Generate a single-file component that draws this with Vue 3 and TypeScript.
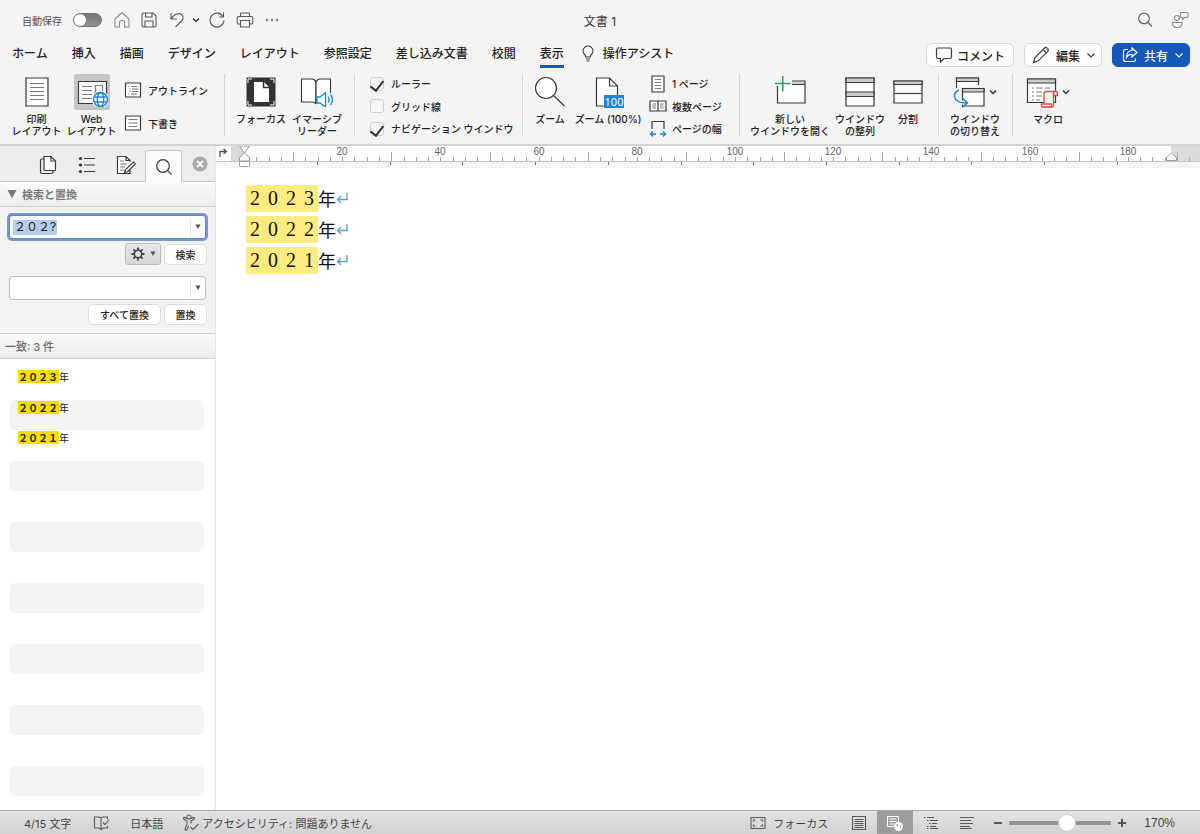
<script setup lang="ts">
import { ref } from 'vue'

const tabs: string[] = ['ホーム', '挿入', '描画', 'デザイン', 'レイアウト', '参照設定', '差し込み文書', '校閲', '表示']
const activeTab = ref('表示')
const autosave = ref(false)
const showRuler = ref(true)
const showGrid = ref(false)
const showNav = ref(true)
const query = ref('２０２?')
const replacement = ref('')
const zoomLevel = ref(58)

const years: string[] = ['2023', '2022', '2021']
const results: string[] = ['２０２３', '２０２２', '２０２１']
const rows: string[] = Array.from({ length: 14 }, (_, i) => results[i] ?? '')

interface Tick { x: number; tall: boolean }
const origin = 28
const unit = 4.91
const ticks: Tick[] = Array.from({ length: 77 }, (_, i) => ({
  x: Math.round(origin + (i + 1) * 2.5 * unit),
  tall: (i + 1) % 8 === 4,
}))
const labels = Array.from({ length: 9 }, (_, i) => ({
  x: Math.round(origin + (i + 1) * 20 * unit),
  value: (i + 1) * 20,
}))
const tabStops: number[] = Array.from({ length: 12 }, (_, i) => Math.round(101 + i * 72.7))
</script>

<template>
  <div class="app">
    <header class="titlebar">
      <div class="quick">
        <label class="autosave">自動保存<input v-model="autosave" type="checkbox" class="switch" /></label>
        <button class="ib home" aria-label="ホーム">
          <svg width="18" height="18" viewBox="0 0 18 18" class="ln light"><path d="M2 8 L9 1.5 L16 8 V16 H11.5 V11 Q11.5 9.5 9 9.5 Q6.5 9.5 6.5 11 V16 H2 Z" /></svg>
        </button>
        <button class="ib save" aria-label="保存">
          <svg width="18" height="18" viewBox="0 0 18 18" class="ln"><path d="M3.5 2 H13 L16 5 V14.5 Q16 16 14.5 16 H3.5 Q2 16 2 14.5 V3.5 Q2 2 3.5 2 Z M5.5 2 V6 H12 V2 M5 16 V10 H13 V16" /></svg>
        </button>
        <button class="ib undo" aria-label="元に戻す">
          <svg width="18" height="18" viewBox="0 0 18 18" class="ln"><path d="M3 2 V8 H9 M3.3 7.5 C7 2 12.5 1.500 14.500 4.500 C16 7 14.500 9 13 10.500 L7.500 16" /></svg>
        </button>
        <button class="ib chev" aria-label="履歴">
          <svg width="8" height="8" viewBox="0 0 8 8" class="ln bold"><path d="M1 2.500 L4 5.500 L7 2.500" /></svg>
        </button>
        <button class="ib redo" aria-label="繰り返し">
          <svg width="18" height="18" viewBox="0 0 18 18" class="ln"><path d="M15.500 1.500 V6 H11 M15 5.500 A7 7 0 1 0 16 9.500" /></svg>
        </button>
        <button class="ib print" aria-label="印刷">
          <svg width="18" height="18" viewBox="0 0 18 18" class="ln"><path d="M4.500 5.500 V2.500 Q4.500 2 5 2 H13 Q13.500 2 13.500 2.500 V5.500 M4.500 13 H2.500 Q1.200 13 1.200 11.700 V7 Q1.200 5.500 2.700 5.500 H15.300 Q16.800 5.500 16.800 7 V11.700 Q16.800 13 15.500 13 H13.500 M4.500 9.500 H13.500 V16 H4.500 Z" /></svg>
        </button>
        <button class="ib dots" aria-label="その他">
          <svg width="14" height="4" viewBox="0 0 14 4" fill="#777"><circle cx="2" cy="2" r="1.200" /><circle cx="7" cy="2" r="1.200" /><circle cx="12" cy="2" r="1.200" /></svg>
        </button>
      </div>
      <h1 class="title">文書 1</h1>
      <div class="right-tools">
        <button class="ib" aria-label="検索">
          <svg width="18" height="18" viewBox="0 0 18 18" class="ln"><circle cx="8" cy="7.500" r="5.300" /><path d="M12 11.500 L16 15.500" /></svg>
        </button>
        <button class="ib" aria-label="共同編集">
          <svg width="18" height="18" viewBox="0 0 18 18" class="ln light"><circle cx="6" cy="7" r="2.500" /><path d="M1.500 11.500 H11 Q11.500 16.500 6.300 16.500 Q1 16.500 1.500 11.500 Z M10.500 1.500 H16 Q17 1.500 17 2.500 V5.500 Q17 6.500 16 6.500 H13.500 L11.500 8.500 V6.500 H10.500 Q9.500 6.500 9.500 5.500 V2.500 Q9.500 1.500 10.500 1.500 Z" /></svg>
        </button>
      </div>
    </header>

    <nav class="tabs">
      <button v-for="t in tabs" :key="t" class="tab" :class="{ active: t === activeTab }" @click="activeTab = t">{{ t }}</button>
      <button class="tab tellme">
        <svg width="12" height="18" viewBox="0 0 12 18" class="ln dark"><path d="M3.800 12 Q3.800 10.500 2.200 8.800 A4.800 4.800 0 1 1 9.800 8.800 Q8.200 10.500 8.200 12 Z M4 14 H8 M4.500 16 H7.500" /></svg>
        操作アシスト
      </button>
      <div class="actions">
        <button class="pill comment">
          <svg width="18" height="18" viewBox="0 0 18 18" class="ln dark"><path d="M3 2 H15 Q16.500 2 16.500 3.500 V11 Q16.500 12.500 15 12.500 H9 L5.500 16 V12.500 H3 Q1.500 12.500 1.500 11 V3.500 Q1.500 2 3 2 Z" /></svg>
          コメント
        </button>
        <button class="pill edit">
          <svg width="18" height="18" viewBox="0 0 18 18" class="ln dark"><path d="M1.500 16.500 L3 11.500 L12.500 2 Q14 0.800 15.500 2.300 Q17 3.900 15.800 5.300 L6.300 14.800 Z M11 3.500 L14.300 6.800" /></svg>
          編集
          <svg width="10" height="10" viewBox="0 0 10 10" class="ln dark"><path d="M1.500 3.500 L5 7 L8.500 3.500" /></svg>
        </button>
        <button class="pill share">
          <svg width="16" height="16" viewBox="0 0 16 16" class="ln"><path d="M6 2.500 H3.500 Q1.500 2.500 1.500 4.500 V12.500 Q1.500 14.500 3.500 14.500 H11.500 Q13.500 14.500 13.500 12.500 V11.500 M10 1 L15 5.500 L10 10 V7.500 Q6.500 7 4.500 10.500 Q4.500 4 10 3.500 Z" /></svg>
          共有
          <svg width="10" height="10" viewBox="0 0 10 10" class="ln"><path d="M1.500 3.500 L5 7 L8.500 3.500" /></svg>
        </button>
      </div>
    </nav>

    <section class="ribbon">
      <div class="group views">
        <button class="big w55">
          <span class="pic"><svg width="30" height="30" viewBox="0 0 30 30" class="ln dark"><path class="paper" d="M4 1 H26 V29 H4 Z" /><path class="grey" d="M8 6.500 H22 M8 10.500 H22 M8 14.500 H22 M8 18.500 H22 M8 22.500 H22" /></svg></span>
          <span>印刷<br />レイアウト</span>
        </button>
        <button class="big w55">
          <span class="pic on"><svg width="32" height="30" viewBox="0 0 32 30" class="ln dark"><path class="paper" d="M2.500 4.500 H30.500 V26.500 H2.500 Z" /><path class="grey" d="M6 9.500 H16 M6 13.500 H16 M6 17.500 H16 M6 21.500 H16 M19.500 8.500 H26.500 V16 H19.500 Z" /><circle cx="24.500" cy="22.500" r="8.500" fill="#fff" stroke="none" /><g stroke="#1e86d2" stroke-width="1.400" fill="none"><circle cx="24.500" cy="22.500" r="7" /><ellipse cx="24.500" cy="22.500" rx="3.200" ry="7" /><path d="M18 20 H31 M18 25 H31" /></g></svg></span>
          <span>Web<br />レイアウト</span>
        </button>
        <div class="stack two">
          <button class="small"><svg width="18" height="16" viewBox="0 0 18 16" class="ln dark"><path class="paper" d="M1.500 1 H16.500 V15 H1.500 Z" /><path class="grey" d="M4 4.500 H5 M7 4.500 H13 M5.500 7 H6.500 M8 7 H14 M5.500 9.500 H6.500 M8 9.500 H14 M4 12 H5 M7 12 H13" /></svg>アウトライン</button>
          <button class="small"><svg width="18" height="16" viewBox="0 0 18 16" class="ln dark"><path class="paper" d="M1.500 1 H16.500 V15 H1.500 Z" /><path class="grey" d="M4.500 4.500 H13.500 M4.500 8 H13.500 M4.500 11.500 H13.500" /></svg>下書き</button>
        </div>
      </div>

      <div class="group immersive">
        <button class="big w56">
          <span class="pic"><svg width="30" height="30" viewBox="0 0 30 30"><path d="M0.500 0.500 H29.500 V29.500 H0.500 Z" fill="#333" /><path d="M8 5 H18 L23 10 V25 H8 Z" fill="#fff" /><path d="M17.500 4.500 V10.500 H23.500" fill="none" stroke="#333" stroke-width="1.500" /><path d="M2 6 V2 H6 M24 2 H28 V6 M28 24 V28 H24 M6 28 H2 V24" fill="none" stroke="#fff" /></svg></span>
          <span>フォーカス</span>
        </button>
        <button class="big w56">
          <span class="pic"><svg width="34" height="30" viewBox="0 0 34 30" class="ln dark"><path class="paper" d="M16 5 Q14.500 2 12 2 H1.500 V25 H12 Q15 25 16 27 Z" /><path class="paper" d="M16 5 Q17.500 2 20 2 H30.500 V17 H22 L16 23 Z" stroke="none" /><path d="M16 26 V5 Q17.500 2 20 2 H30.500 V16" /><g stroke="#1e86d2" stroke-width="1.300"><path fill="#fff" d="M17 20 H20 L25.500 15.500 V30 L20 26 H17 Z" /><path d="M28 19.500 Q30 22.500 28 25.500 M30.500 17.500 Q34.500 22.500 30.500 28" /></g></svg></span>
          <span>イマーシブ<br />リーダー</span>
        </button>
      </div>

      <div class="group shows">
        <div class="stack">
          <label class="check"><input v-model="showRuler" type="checkbox" />ルーラー</label>
          <label class="check"><input v-model="showGrid" type="checkbox" />グリッド線</label>
          <label class="check"><input v-model="showNav" type="checkbox" />ナビゲーション ウインドウ</label>
        </div>
      </div>

      <div class="group zooms">
        <button class="big w40">
          <span class="pic"><svg width="32" height="32" viewBox="0 0 32 32" class="ln dark"><circle class="paper" cx="12" cy="12" r="10.500" /><path d="M19.500 19.500 L30.500 30" /></svg></span>
          <span>ズーム</span>
        </button>
        <button class="big w76">
          <span class="pic"><svg width="32" height="32" viewBox="0 0 32 32" class="ln dark"><path class="paper" d="M4.500 2 H17.500 L25.500 10 V30 H4.500 Z" /><path d="M17.500 2 V10 H25.500" /><rect x="12" y="19" width="20" height="13" fill="#1e86d2" stroke="none" /><text x="22" y="30" text-anchor="middle" class="hundred">100</text></svg></span>
          <span>ズーム (100%)</span>
        </button>
        <div class="stack">
          <button class="small"><svg width="18" height="18" viewBox="0 0 18 18" class="ln dark"><path class="paper" d="M3 1 H15 V17 H3 Z" /><path class="grey" d="M6 4.500 H12 M6 7.500 H12 M6 10.500 H12 M6 13.500 H12" /></svg>1 ページ</button>
          <button class="small"><svg width="18" height="18" viewBox="0 0 18 18" class="ln dark"><path class="paper" d="M1 4 H17 V14 H1 Z M9 4 V14" /><path class="grey" d="M3.500 7 H7 M3.500 9 H7 M3.500 11 H7 M11 7 H14.500 M11 9 H14.500 M11 11 H14.500" /></svg>複数ページ</button>
          <button class="small"><svg width="18" height="18" viewBox="0 0 18 18" class="ln dark"><path d="M3 9 V1.500 H15 V9" /><path stroke="#1e86d2" stroke-width="1.400" d="M1.500 14 H7 M4 11.500 L1.500 14 L4 16.500 M11 14 H16.500 M14 11.500 L16.500 14 L14 16.500" /></svg>ページの幅</button>
        </div>
      </div>

      <div class="group windows">
        <button class="big w84">
          <span class="pic"><svg width="32" height="32" viewBox="0 0 32 32" class="ln dark"><path class="paper" d="M3.500 5 H31 V27 H3.500 Z" stroke="none" /><path fill="#ccc" stroke="none" d="M18 5.500 H31 V8 H18 Z" /><path d="M18 5 H31 V27 H3.500 V10 M18 8.500 H31" /><path stroke="#21a860" stroke-width="1.500" d="M1 7.500 H16.500 M8.800 0 V15.500" /></svg></span>
          <span>新しい<br />ウインドウを開く</span>
        </button>
        <button class="big w56">
          <span class="pic"><svg width="30" height="30" viewBox="0 0 30 30" class="ln dark"><path class="paper" d="M1 1 H29 V29 H1 Z" /><path fill="#ccc" d="M1 1 H29 V5.500 H1 Z M1 15 H29 V19.500 H1 Z" /></svg></span>
          <span>ウインドウ<br />の整列</span>
        </button>
        <button class="big w40">
          <span class="pic"><svg width="30" height="30" viewBox="0 0 30 30" class="ln dark"><path class="paper" d="M1 4 H29 V26 H1 Z" /><path fill="#ccc" d="M1 4 H29 V7.500 H1 Z" /><path d="M1 16.500 H29" /></svg></span>
          <span>分割</span>
        </button>
      </div>

      <div class="group switcher">
        <button class="big w56">
          <span class="pic wide"><svg width="32" height="32" viewBox="0 0 32 32" class="ln dark"><path class="paper" d="M3.500 12 V2 H25.500 V9" /><path fill="#ccc" d="M3.500 2 H25.500 V5.500 H3.500 Z" /><path class="paper" d="M9.500 12.500 H31 V30 H9.500 Z" /><path fill="#ccc" d="M9.500 12.500 H31 V16 H9.500 Z" /><path d="M6 14 Q1 16 1.500 20.500 Q2.500 27 14 27" stroke="#f4f4f4" stroke-width="4" /><path stroke="#1e86d2" stroke-width="1.500" d="M6 14 Q1 16 1.500 20.500 Q2.500 27 14 27 M9 21.500 L14.500 27 L9 31.500" /></svg><svg width="8" height="8" viewBox="0 0 8 8" class="ln bold"><path d="M1 2.500 L4 5.500 L7 2.500" /></svg></span>
          <span>ウインドウ<br />の切り替え</span>
        </button>
      </div>

      <div class="group macro">
        <button class="big w56">
          <span class="pic wide"><svg width="32" height="32" viewBox="0 0 32 32" class="ln dark"><path class="paper" d="M1.500 3 H29.500 V26.500 H1.500 Z" /><path fill="#ccc" d="M1.500 3 H29.500 V7 H1.500 Z" /><path class="grey" d="M6 12 H8 M10 12 H17 M19 12 H24 M6 16 H8 M10 16 H16 M6 20 H8 M10 20 H16 M6 24 H8 M10 24 H14" /><g stroke="#ea4a4a" stroke-width="1.400" fill="#fff"><path d="M18 28 V17.500 Q18 15.500 20 15.500 H29.500 Q27.500 15.500 27.500 17.500 V29 Q27.500 31 25.500 31 L18 31 Z" /><path d="M27.500 19.500 H31.500 V17.500 Q31.500 15.500 29.500 15.500 Q27.500 15.500 27.500 17.500 Z M15.500 28 H25.500 V31 H17 Q15.500 31 15.500 29.500 Z" /></g></svg><svg width="8" height="8" viewBox="0 0 8 8" class="ln bold"><path d="M1 2.500 L4 5.500 L7 2.500" /></svg></span>
          <span>マクロ</span>
        </button>
      </div>
    </section>

    <main class="body">
      <aside class="side">
        <div class="side-tabs">
          <button class="stab" aria-label="サムネイル"><svg width="18" height="20" viewBox="0 0 18 20" class="ln dark"><path class="paper" d="M5 1.500 H12 L16.500 6 V14.500 Q16.500 15.500 15.500 15.500 H6 Q5 15.500 5 14.500 Z" /><path d="M12 1.500 V6 H16.500 M5 4 H3 Q1.500 4 1.500 5.500 V17 Q1.500 18.500 3 18.500 H12.500 Q14 18.500 14 17 V15.500" /></svg></button>
          <button class="stab" aria-label="見出しマップ"><svg width="18" height="20" viewBox="0 0 18 20" class="ln dark"><path d="M6 3.500 H17 M6 10 H17 M6 16.500 H17" /><g fill="#333" stroke="none"><circle cx="2.500" cy="3.500" r="1.600" /><circle cx="2.500" cy="10" r="1.600" /><circle cx="2.500" cy="16.500" r="1.600" /></g></svg></button>
          <button class="stab" aria-label="変更履歴"><svg width="20" height="20" viewBox="0 0 20 20" class="ln dark"><path class="paper" d="M14 7 V5.500 L10 1.500 H1.500 V18.500 H14 V15" /><path d="M10 1.500 V5.500 H14" /><path class="grey" d="M4 6 H8 M4 9 H11 M4 12 H9 M4 15 H8" /><path fill="#fff" d="M8.500 17.500 L9.500 14.500 L17.500 7 L19.500 9 L11.500 16.800 Z" /></svg></button>
          <button class="stab sel" aria-label="検索"><svg width="18" height="18" viewBox="0 0 18 18" class="ln dark"><circle cx="8" cy="8" r="6.300" /><path d="M12.700 12.700 L16.500 16.500" /></svg></button>
          <button class="close" aria-label="閉じる"><svg width="16" height="16" viewBox="0 0 16 16"><circle cx="8" cy="8" r="7.500" fill="#a9a9a9" /><path d="M5 5 L11 11 M11 5 L5 11" stroke="#fff" stroke-width="1.800" /></svg></button>
        </div>
        <h2 class="bar find">
          <svg width="10" height="10" viewBox="0 0 10 10"><path d="M0.500 1 H9.500 L5 9.500 Z" fill="#777" /></svg>
          検索と置換
        </h2>
        <div class="form">
          <div class="combo focus">
            <div class="query"><span class="selection" aria-hidden="true"></span><input v-model="query" type="text" aria-label="検索文字列" /></div>
            <button class="drop" aria-label="検索履歴"><svg width="6" height="6" viewBox="0 0 6 6"><path d="M0.500 0.500 H5.500 L3 5 Z" fill="#555" /></svg></button>
          </div>
          <div class="btns">
            <button class="gear" aria-label="検索オプション">
              <svg width="14" height="14" viewBox="0 0 14 14"><circle cx="7" cy="7" r="3.700" fill="none" stroke="#444" stroke-width="1.600" /><path d="M7 0.500 V3 M7 11 V13.500 M0.500 7 H3 M11 7 H13.500 M2.400 2.400 L4.200 4.200 M9.800 9.800 L11.600 11.600 M2.400 11.600 L4.200 9.800 M9.800 4.200 L11.600 2.400" stroke="#444" stroke-width="1.800" /></svg>
              <svg width="6" height="6" viewBox="0 0 6 6"><path d="M0.500 0.500 H5.500 L3 5 Z" fill="#555" /></svg>
            </button>
            <button class="btn">検索</button>
          </div>
          <div class="combo">
            <div class="query"><input v-model="replacement" type="text" aria-label="置換文字列" /></div>
            <button class="drop" aria-label="置換履歴"><svg width="6" height="6" viewBox="0 0 6 6"><path d="M0.500 0.500 H5.500 L3 5 Z" fill="#555" /></svg></button>
          </div>
          <div class="btns second">
            <button class="btn all">すべて置換</button>
            <button class="btn">置換</button>
          </div>
        </div>
        <h2 class="bar count">一致: 3 件</h2>
        <ul class="results">
          <li v-for="(r, i) in rows" :key="i"><template v-if="r"><mark>{{ r }}</mark>年</template></li>
        </ul>
      </aside>

      <section class="doc">
        <svg class="ruler" width="100%" height="22">
          <rect x="0" y="0" width="100%" height="15" fill="#fdfdfd" />
          <rect x="0" y="16" width="100%" height="6" fill="#f5f5f5" />
          <rect x="15" y="0" width="13" height="15" fill="#d9d9d9" />
          <rect x="955" y="0" width="100%" height="15" fill="#dcdcdc" />
          <path d="M0 15.500 H4000" stroke="#c4c4c4" />
          <path d="M4 11 V5.500 H10 M7.500 3 L10.500 5.500 L7.500 8" fill="none" stroke="#555" stroke-width="1.300" />
          <rect v-for="t in ticks" :key="t.x" :x="t.x" :y="t.tall ? 6 : 11" width="1" :height="t.tall ? 9 : 4" fill="#a5a5a5" />
          <rect v-for="s in tabStops" :key="s" :x="s" y="16" width="1" height="3" fill="#777" />
          <text v-for="l in labels" :key="l.value" :x="l.x" y="9" text-anchor="middle">{{ l.value }}</text>
          <g fill="#fff" stroke="#9a9a9a"><path d="M23.500 0 H33.500 L28.500 7 Z" /><path d="M23.500 15 V11.500 L28.500 7 L33.500 11.500 V15 Z" /><rect x="23.500" y="15.500" width="10" height="5" rx="1" /><path d="M950.500 14.500 V11.500 L955.500 7 L960.500 11.500 V14.500 Z" /></g>
        </svg>
        <article class="page">
          <p v-for="y in years" :key="y"><mark><span v-for="(d, i) in y" :key="i" class="digit">{{ d }}</span></mark><span class="nen">年</span><svg width="12" height="14" viewBox="0 0 12 14"><path d="M11 1 V7.500 H1.500 M5 4 L1.500 7.500 L5 11" fill="none" stroke="#5b9cdb" stroke-width="1.300" /></svg></p>
        </article>
      </section>
    </main>

    <footer class="status">
      <span>4/15 文字</span>
      <button class="sb proof" aria-label="文章校正"><svg width="18" height="16" viewBox="0 0 18 16" class="ln mid"><path d="M8 3 Q7 2 5.500 2 H1.500 V13 H6 L8 14.500 Z M8 3 Q9 2 10.500 2 H14.500 V4.500 M8 14.500 L10 13 H14.500 V11 M10 7.500 L12 9.500 L16.500 4.500" /></svg></button>
      <button class="sb lang">日本語</button>
      <button class="sb access"><svg width="18" height="18" viewBox="0 0 18 18" class="ln mid"><circle cx="7" cy="3" r="2" /><path d="M5 4.500 L2.500 3.200 Q1 3.500 1.800 5 L5 7 V10 L3 15 Q3.500 17 5 15.500 L6.500 12 M9 4.500 L11.500 3.200 Q13 3.500 12.200 5 L9 7 V9.500 M8.500 13 L11 15.500 L16.500 10" /></svg>アクセシビリティ: 問題ありません</button>
      <div class="status-right">
        <button class="sb focusb"><svg width="16" height="14" viewBox="0 0 16 14" class="ln mid"><path d="M1 1.500 H15 V12.500 H1 Z M3.500 5.500 V4 H5.500 M10.500 4 H12.500 V5.500 M12.500 8.500 V10 H10.500 M5.500 10 H3.500 V8.500" /></svg>フォーカス</button>
        <button class="sb view" aria-label="印刷レイアウト"><svg width="16" height="16" viewBox="0 0 16 16" class="ln mid"><path d="M1.500 1.500 H14.500 V14.500 H1.500 Z M3.500 4.500 H12.500 M3.500 6.500 H12.500 M3.500 8.500 H12.500 M3.500 10.500 H12.500 M3.500 12.500 H12.500" /></svg></button>
        <button class="sb view on" aria-label="Web レイアウト"><svg width="18" height="18" viewBox="0 0 18 18"><path d="M1.500 2.500 H12.500 V8 M1.500 2.500 V12.500 H8 M3.500 5 H10.500 M3.500 7.500 H10.500 M3.500 10 H8" fill="none" stroke="#fff" /><circle cx="12.500" cy="12.500" r="4.500" fill="#fff" /><path d="M10 10 L12.500 10.500 L11.500 13 Z M13.500 12.500 L15.500 11.500 L14.500 15 Z" fill="#999" /></svg></button>
        <button class="sb view" aria-label="アウトライン"><svg width="16" height="16" viewBox="0 0 16 16" class="ln mid"><path d="M1 2.500 H2.500 M4 2.500 H11 M4 5.500 H5.500 M7 5.500 H15 M6 8.500 H7.500 M9 8.500 H14 M4 11.500 H5.500 M7 11.500 H13 M4 13.500 H5.500 M7 13.500 H15" /></svg></button>
        <button class="sb view" aria-label="下書き"><svg width="16" height="16" viewBox="0 0 16 16" class="ln mid"><path d="M1 2.500 H15 M1 5.500 H12 M1 8.500 H14 M1 11.500 H11 M1 13.500 H13" /></svg></button>
        <button class="sb step minus" aria-label="縮小"><svg width="10" height="10" viewBox="0 0 10 10"><path d="M1 5 H9" stroke="#555" stroke-width="2" /></svg></button>
        <input v-model="zoomLevel" type="range" min="0" max="100" aria-label="ズーム" />
        <button class="sb step" aria-label="拡大"><svg width="10" height="10" viewBox="0 0 10 10"><path d="M1 5 H9 M5 1 V9" stroke="#555" stroke-width="2" /></svg></button>
        <span class="pct">170%</span>
      </div>
    </footer>
  </div>
</template>

<style>
body { margin: 0; }
</style>

<style scoped>
* { box-sizing: border-box; }
.app {
  min-height: 100vh;
  display: flex;
  flex-direction: column;
  background: #f4f4f4;
  color: #222;
  font-family: "Inter", "Noto Sans CJK JP", sans-serif;
  font-size: 12px;
}
button {
  border: 0;
  padding: 0;
  background: none;
  color: inherit;
  font: inherit;
}
svg { display: block; flex: none; }
.ln { fill: none; stroke: #5a5a5a; stroke-width: 1.1; }
.ln.light { stroke: #8c8c8c; }
.ln.dark { stroke: #3a3a3a; stroke-width: 1.2; }
.ln.mid { stroke: #5c5c5c; }
.ln.bold { stroke: #333; stroke-width: 1.5; }
.paper { fill: #fff; }
.grey { stroke: #7d7d7d; }

.titlebar {
  height: 40px;
  display: grid;
  grid-template-columns: 1fr auto 1fr;
  align-items: center;
  padding: 0 11px;
}
.quick { display: flex; align-items: center; padding-left: 11px; }
.autosave { display: flex; align-items: center; gap: 11px; font-size: 10px; color: #555; margin-right: 11px; }
.switch {
  appearance: none;
  width: 29px;
  height: 14px;
  margin: 0;
  border-radius: 7px;
  border: 1px solid #707070;
  background: linear-gradient(#777, #909090);
  display: flex;
}
.switch::before { content: ""; width: 12px; height: 12px; border-radius: 6px; background: #fff; }
.switch:checked { justify-content: flex-end; }
.save { margin-left: 9px; }
.undo { margin-left: 10px; }
.chev { margin-left: 6px; }
.redo { margin-left: 8px; }
.print { margin-left: 10px; }
.dots { margin-left: 11px; }
.title { margin: 0; font-size: 12px; font-weight: 400; color: #333; }
.right-tools { display: flex; justify-content: flex-end; gap: 17px; }

.tabs { height: 28px; display: flex; align-items: center; gap: 24px; padding: 0 10px 0 12px; }
.tab { height: 28px; line-height: 22px; font-weight: 500; white-space: nowrap; border-bottom: 3px solid transparent; padding-top: 3px; }
.tab.active { border-bottom-color: #1857b8; }
.tellme { display: flex; align-items: center; gap: 9px; margin-left: -6px; }
.actions { margin-left: auto; display: flex; gap: 10px; padding-top: 2px; }
.pill {
  height: 24px;
  display: flex;
  align-items: center;
  justify-content: center;
  gap: 4px;
  border: 1px solid #d8d8d8;
  border-radius: 6px;
  background: #fff;
  padding: 0 8px;
  font-weight: 500;
  white-space: nowrap;
}
.edit, .share { gap: 6px; padding: 0 5px 0 7px; }
.share { background: #1558bd; border-color: #1558bd; color: #fff; padding-left: 9px; }
.share .ln { stroke: #fff; stroke-width: 1.2; }

.ribbon { height: 78px; display: flex; padding-top: 6px; border-bottom: 2px solid #d4d4d4; font-size: 10px; }
.group { display: flex; align-items: flex-start; height: 62px; border-right: 1px solid #d6d6d6; }
.group:last-child { border-right: 0; }
.views { width: 225px; padding-left: 9px; }
.immersive { width: 130px; padding-left: 8px; }
.shows { width: 168px; padding-left: 15px; }
.zooms { width: 217px; padding-left: 7px; }
.windows { width: 199px; padding-left: 8px; }
.switcher { width: 74px; padding-left: 8px; }
.macro { padding-left: 7px; }
.big { display: flex; flex-direction: column; align-items: center; gap: 3px; line-height: 12px; white-space: nowrap; font-weight: 500; }
.w40 { width: 40px; }
.w55 { width: 55px; }
.w56 { width: 56px; }
.w76 { width: 76px; }
.w84 { width: 84px; }
.pic { width: 36px; height: 36px; flex: none; display: flex; align-items: center; justify-content: center; }
.pic.on { background: #c4c4c4; border-radius: 3px; }
.pic.wide { width: 44px; gap: 4px; }
.hundred { font: 11px "Noto Sans", sans-serif; fill: #fff; stroke: none; }
.stack { display: flex; flex-direction: column; justify-content: space-between; height: 64px; }
.stack.two { justify-content: flex-start; gap: 17px; padding: 8px 0 0 5px; }
.small { display: flex; align-items: center; gap: 6px; height: 19px; white-space: nowrap; font-weight: 500; }
.two .small { height: 16px; }
.zooms .stack { margin-left: 3px; }
.zooms .small { gap: 5px; }
.check { display: flex; align-items: center; gap: 7px; height: 19px; white-space: nowrap; font-weight: 500; }
.check input {
  appearance: none;
  width: 14px;
  height: 14px;
  margin: 0;
  border: 1px solid #cfcfcf;
  border-radius: 3px;
  background: linear-gradient(#f2f2f2, #fafafa);
  display: grid;
  place-items: center;
}
.check input:checked::before { content: ""; width: 6px; height: 11px; border: solid #333; border-width: 0 2px 2px 0; transform: rotate(38deg); margin-bottom: 4px; }

.body { flex: 1; display: flex; }
.side { width: 216px; flex: none; background: #fff; border-right: 1px solid #e6e6e6; }
.side-tabs { height: 36px; display: flex; align-items: flex-end; background: #ededed; border-bottom: 1px solid #cacaca; padding-left: 28px; }
.stab { width: 39px; height: 33px; display: flex; align-items: center; justify-content: center; }
.stab.sel { width: 37px; height: 32px; margin-bottom: -1px; background: #fbfbfb; border: 1px solid #cacaca; border-bottom: 0; border-radius: 3px 3px 0 0; }
.close { margin: 0 0 9px 10px; }
.bar { margin: 0; height: 26px; display: flex; align-items: center; font-size: 11px; font-weight: 500; color: #6b6b6b; background: linear-gradient(#fbfbfb, #ededed); border-bottom: 1px solid #cfcfcf; }
.find { gap: 5px; padding-left: 7px; font-weight: 700; color: #7a7a7a; height: 25px; }
.count { padding-left: 5px; border-top: 1px solid #d2d2d2; }
.form { height: 126px; background: #f3f3f3; padding: 8px 9px 0 9px; }
.combo { display: flex; align-items: center; height: 24px; background: #fff; border: 1px solid #bdbdbd; border-radius: 3px; }
.combo.focus { border-color: #5f83c8; box-shadow: 0 0 0 2px #7798d6; }
.query { flex: 1; min-width: 0; display: grid; align-items: center; }
.query > * { grid-area: 1 / 1; }
.query input { width: 100%; border: 0; outline: 0; padding: 0 0 0 4px; background: none; color: #222; font: 12px/16px "Inter", "Noto Sans CJK JP", sans-serif; z-index: 1; }
.selection { width: 44px; height: 15px; margin-left: 3px; background: #b4cdec; }
.drop { width: 15px; height: 17px; display: flex; align-items: center; justify-content: center; border-left: 1px solid #e3e3e3; }
.btns { display: flex; justify-content: flex-end; align-items: center; gap: 3px; margin: 4px -1px 11px 0; font-size: 10px; }
.btns.second { margin-top: 4px; margin-bottom: 0; }
.gear { width: 36px; height: 22px; display: flex; align-items: center; justify-content: center; gap: 5px; border: 1px solid #bbb; border-radius: 3px; background: linear-gradient(#e6e6e6, #d6d6d6); }
.btn { width: 43px; height: 21px; background: #fff; border: 1px solid #dcdcdc; border-radius: 5px; font-weight: 500; }
.btn.all { width: 73px; }
.results { margin: 0; padding: 10px 11px 0 10px; list-style: none; font-size: 10px; font-weight: 400; }
.results li { height: 30px; border-radius: 5px; padding: 1px 8px; line-height: 14px; }
.results li:nth-child(odd) { height: 31px; }
.results li:nth-child(even) { background: #f3f5f5; }
.results mark { display: inline-block; height: 13px; background: #ffdb00; color: #222; font-weight: 700; line-height: 14px; padding-right: 1px; }

.doc { flex: 1; min-width: 0; background: #fff; }
.ruler { overflow: hidden; }
.ruler text { font: 10px "Liberation Sans", sans-serif; fill: #666; }
.page { padding: 17px 30px; color: #111; }
.page p { margin: 0 0 4px; height: 27px; display: flex; align-items: center; }
.page mark { display: flex; height: 27px; background: #ffec80; color: #111; }
.digit { width: 18px; text-align: center; font: 20px/27px "Liberation Serif", serif; }
.nen { font: 18px/27px "Noto Sans CJK JP", sans-serif; }

.status { height: 24px; display: flex; align-items: center; padding: 0 25px 0 24px; font-size: 11px; color: #444; background: linear-gradient(#e2e2e2, #d2d2d2); border-top: 1px solid #aaa; white-space: nowrap; }
.sb { display: flex; align-items: center; height: 23px; }
.proof { margin-left: 22px; }
.lang { margin-left: 19px; }
.access { margin-left: 19px; gap: 2px; }
.status-right { margin-left: auto; display: flex; align-items: center; }
.focusb { gap: 7px; margin-right: 13px; }
.view { width: 36px; justify-content: center; }
.view.on { background: #9c9c9c; }
.step { width: 10px; }
.step.minus { margin-left: 8px; }
.status input {
  appearance: none;
  width: 102px;
  height: 18px;
  margin: 0 6px;
  background: linear-gradient(#959595, #959595) center / 100% 4px no-repeat;
}
.status input::-webkit-slider-thumb { appearance: none; width: 18px; height: 18px; border-radius: 9px; background: #fff; border: 1px solid #ccc; }
.pct { font: 12px "Liberation Sans", sans-serif; margin-left: 17px; }
</style>
